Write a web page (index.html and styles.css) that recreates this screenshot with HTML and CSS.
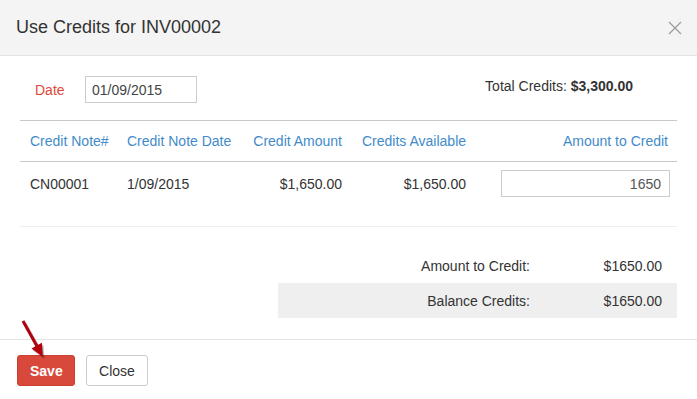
FILE: index.html
```html
<!DOCTYPE html>
<html lang="en">
<head>
    <meta charset="UTF-8">
    <title>Use Credits</title>
    <link rel="stylesheet" href="styles.css">
</head>
<body>
    <div class="modal">
        <div class="modal-header">
            <h4 class="modal-title">Use Credits for INV00002</h4>
            <button class="close-x" type="button" aria-label="Close">
                <svg width="14" height="14" viewBox="0 0 14 14">
                    <path d="M1 1 L13 13 M13 1 L1 13" stroke="#9a9a9a" stroke-width="1.2" fill="none"/>
                </svg>
            </button>
        </div>

        <div class="modal-body">
            <div class="top-row">
                <div class="date-group">
                    <label for="date" class="date-label">Date</label>
                    <input type="text" id="date" class="date-input" value="01/09/2015">
                </div>
                <div class="total">Total Credits: <b>$3,300.00</b></div>
            </div>

            <table class="credits">
                <colgroup>
                    <col class="c1"><col class="c2"><col class="c3"><col class="c4"><col class="c5">
                </colgroup>
                <thead>
                    <tr>
                        <th>Credit Note#</th>
                        <th>Credit Note Date</th>
                        <th class="num">Credit Amount</th>
                        <th class="num">Credits Available</th>
                        <th class="num">Amount to Credit</th>
                    </tr>
                </thead>
                <tbody>
                    <tr>
                        <td>CN00001</td>
                        <td>1/09/2015</td>
                        <td class="num">$1,650.00</td>
                        <td class="num">$1,650.00</td>
                        <td class="num amount-cell"><input type="text" class="amount-input" value="1650"></td>
                    </tr>
                </tbody>
            </table>

            <div class="divider"></div>

            <div class="summary">
                <div class="sum-row">
                    <span class="sum-label">Amount to Credit:</span>
                    <span class="sum-value">$1650.00</span>
                </div>
                <div class="sum-row shaded">
                    <span class="sum-label">Balance Credits:</span>
                    <span class="sum-value">$1650.00</span>
                </div>
            </div>
        </div>

        <div class="modal-footer">
            <svg class="pointer" width="40" height="46" viewBox="0 0 40 46">
                <g transform="translate(1.5,2)" opacity="0.25">
                    <line x1="8" y1="5" x2="23" y2="32" stroke="#000" stroke-width="3.5"/>
                    <polygon points="28,41 26.9,26.7 16.5,32.5" fill="#000"/>
                </g>
                <line x1="8" y1="5" x2="23" y2="32" stroke="#b4000c" stroke-width="3"/>
                <polygon points="28,41 26.9,26.7 16.5,32.5" fill="#b4000c"/>
            </svg>
            <button type="button" class="btn btn-save">Save</button>
            <button type="button" class="btn btn-close">Close</button>
        </div>
    </div>
</body>
</html>
```

FILE: styles.css
```css
body {
    margin: 0;
    padding: 0;
    font-family: "Liberation Sans", Arial, sans-serif;
    font-size: 14px;
    color: #333;
    background: #fff;
}

.modal {
    width: 697px;
    height: 399px;
    overflow: hidden;
}

.modal-header {
    display: flex;
    justify-content: space-between;
    align-items: center;
    height: 56px;
    padding: 0 15px 0 16px;
    box-sizing: border-box;
    background: #f4f4f4;
    border-bottom: 1px solid #e3e3e3;
}

.modal-title {
    margin: 0;
    font-size: 18px;
    font-weight: normal;
    color: #333;
}

.close-x {
    border: none;
    background: none;
    padding: 0;
    width: 14px;
    height: 14px;
    display: flex;
}

.modal-body {
    padding: 20px 20px 0 20px;
}

.top-row {
    display: flex;
    justify-content: space-between;
    align-items: flex-start;
}

.date-group {
    display: flex;
    align-items: center;
    padding-left: 15px;
}

.date-label {
    width: 50px;
    color: #e0483a;
}

.date-input {
    width: 112px;
    height: 27px;
    box-sizing: border-box;
    border: 1px solid #ccc;
    padding: 0 6px;
    font-family: inherit;
    font-size: 14px;
    color: #444;
}

.total {
    margin-top: 2px;
    margin-right: 44px;
}

.credits {
    width: 657px;
    margin-top: 17px;
    border-collapse: collapse;
    table-layout: fixed;
}

.c1 { width: 97px; }
.c2 { width: 124px; }
.c3 { width: 111px; }
.c4 { width: 124px; }
.c5 { width: 201px; }

.credits th {
    height: 40px;
    padding: 0 10px;
    font-weight: normal;
    text-align: left;
    color: #428bca;
    border-top: 1px solid #c8c8c8;
    border-bottom: 1px solid #c8c8c8;
    white-space: nowrap;
}

.credits td {
    height: 43px;
    padding: 0 10px;
    vertical-align: middle;
}

.credits .num {
    text-align: right;
}

.credits th.num:last-child {
    padding-right: 9px;
}

.credits td.amount-cell {
    padding-right: 7px;
}

.amount-input {
    width: 169px;
    height: 27px;
    box-sizing: border-box;
    border: 1px solid #ccc;
    padding: 0 8px;
    text-align: right;
    font-family: inherit;
    font-size: 14px;
    color: #555;
}

.divider {
    margin-top: 21px;
    border-top: 1px solid #eee;
}

.summary {
    width: 399px;
    margin-left: auto;
    margin-top: 21px;
}

.sum-row {
    display: flex;
    height: 35px;
    align-items: center;
}

.sum-row.shaded {
    background: #efefef;
}

.sum-label {
    width: 252px;
    text-align: right;
}

.sum-value {
    flex: 1;
    text-align: right;
    padding-right: 15px;
}

.modal-footer {
    position: relative;
    margin-top: 21px;
    border-top: 1px solid #e5e5e5;
    padding: 15px 17px 13px 17px;
    display: flex;
    gap: 11px;
}

.pointer {
    position: absolute;
    left: 15px;
    top: -24px;
}

.btn {
    height: 31px;
    padding: 0 12px;
    font-family: inherit;
    font-size: 14px;
    border-radius: 3px;
    cursor: pointer;
}

.btn-save {
    width: 58px;
    background: #d9493b;
    border: 1px solid #c9402f;
    color: #fff;
    font-weight: bold;
}

.btn-close {
    width: 62px;
    background: #fff;
    border: 1px solid #ccc;
    color: #333;
}
```
